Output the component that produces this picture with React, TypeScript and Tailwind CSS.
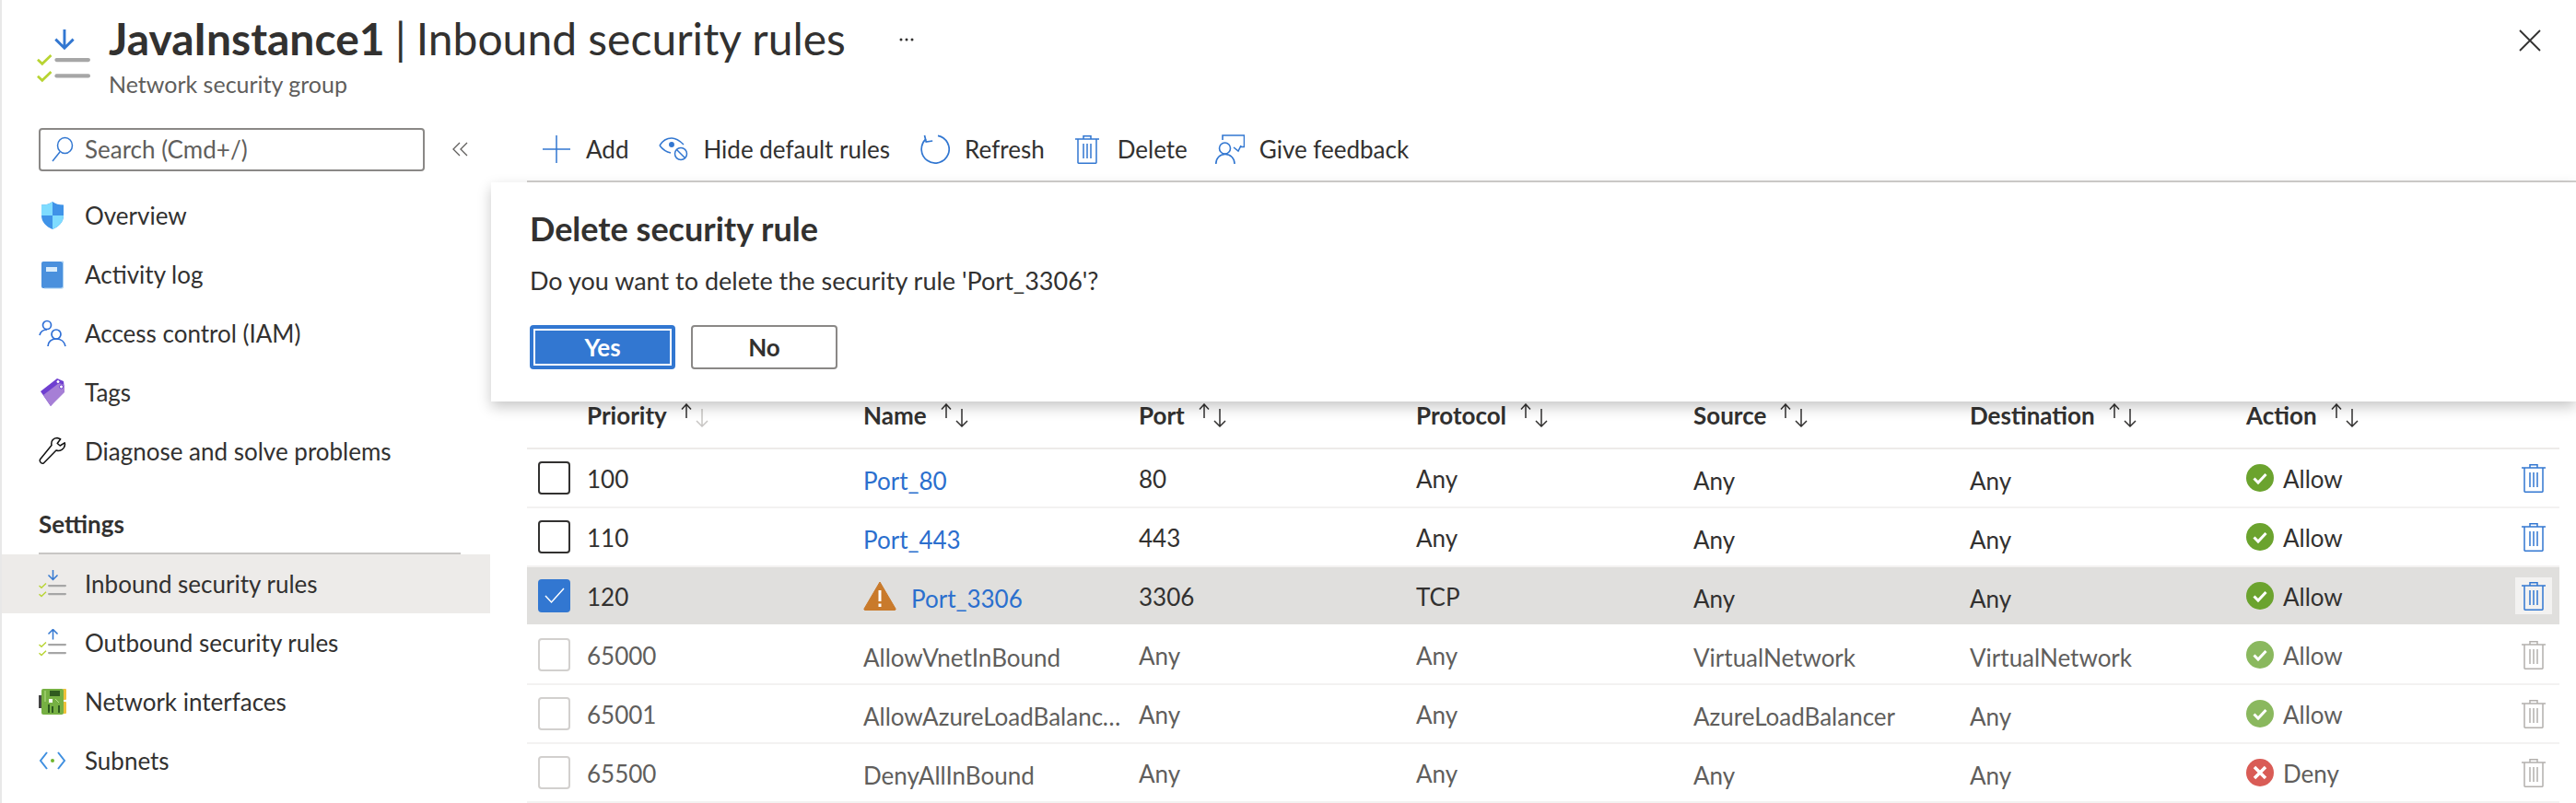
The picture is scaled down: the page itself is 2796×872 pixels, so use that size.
const blue = "#3277d1"

function RulesIcon({ up = false, big = false }: { up?: boolean; big?: boolean }) {
  return (
    <svg width={big ? 58 : 30} height={big ? 58 : 30} viewBox="0 0 30 30" className="shrink-0">
      {up ? (
        <path d="M15.500 11.500V.500M10.500 5.500l5-5 5 5" fill="none" stroke={blue} strokeWidth="1.500" />
      ) : (
        <path d="M15.500 0v10.500M10.500 5.500l5 5 5-5" fill="none" stroke={blue} strokeWidth="1.500" />
      )}
      <path d="M.500 17l2.500 2.300L8 14.500M.500 26.300l2.500 2.300L8 23.800" fill="none" stroke="#b8d432" strokeWidth="1.400" />
      <rect x="10" y="16" width="20" height="2.200" rx="1.100" fill="#a6a6a6" />
      <rect x="10" y="25" width="20" height="2.200" rx="1.100" fill="#a6a6a6" />
    </svg>
  )
}

function ShieldIcon() {
  return (
    <svg width="30" height="32" viewBox="0 0 30 32" className="shrink-0">
      <path d="M15 1c3 2.500 7 3.500 12 3.500V16c0 7-5 12-12 15C8 28 3 23 3 16V4.500C8 4.500 12 3.500 15 1z" fill="#3f93e8" />
      <path d="M15 1v15H3V4.500C8 4.500 12 3.500 15 1zM15 16h12c0 7-5 12-12 15z" fill="#7fdcff" />
    </svg>
  )
}

function BookIcon() {
  return (
    <svg width="30" height="32" viewBox="0 0 30 32" className="shrink-0">
      <rect x="3" y="2" width="23" height="29" rx="2" fill="#4a90dd" />
      <path d="M25 2h1.500v28a1 1 0 0 1-1 1H6" fill="none" stroke="#a6cff2" strokeWidth="1" />
      <rect x="8" y="8" width="12" height="5" fill="#d9ecfb" />
    </svg>
  )
}

function PeopleIcon() {
  return (
    <svg width="30" height="32" viewBox="0 0 30 32" fill="none" stroke="#2f6fd6" strokeWidth="1.700" className="shrink-0">
      <circle cx="9" cy="7" r="4.500" />
      <path d="M1 18c1-4 4-6 8-6" />
      <circle cx="19" cy="17" r="5" />
      <path d="M10 30c0-5 4-8 9-8s9 3 10 8" />
    </svg>
  )
}

function TagIcon() {
  return (
    <svg width="30" height="32" viewBox="0 0 30 32" className="shrink-0">
      <path d="M2 15L20 1l7 3 1 9-15 18z" fill="#6f3fd0" />
      <path d="M5 19L22 6l6 2 0 8-15 15z" fill="#a67fd6" />
      <circle cx="21" cy="4.500" r="2" fill="#fff" stroke="#6f3fd0" />
      <circle cx="24.500" cy="10" r="2" fill="#fff" stroke="#6f3fd0" />
    </svg>
  )
}

function WrenchIcon() {
  return (
    <svg width="30" height="32" viewBox="0 0 30 32" fill="none" stroke="#111" strokeWidth="1.500" className="shrink-0">
      <path d="M20 1.500c-4 0-7 3.500-6 8L1.800 24.500c-1.500 2 .5 5.500 3.500 4.500L19 15c4 1.500 9-1 9.500-6.500l-.3-1.700-5 3.200-3-2.500 3.500-4.700z" strokeLinejoin="round" />
    </svg>
  )
}

function NicIcon() {
  return (
    <svg width="30" height="30" viewBox="0 0 30 30" className="shrink-0">
      <rect x="0" y="8" width="3" height="14" fill="#444" />
      <rect x="26" y="1" width="4" height="12" rx="1" fill="#efc13a" />
      <rect x="26" y="15" width="4" height="13" rx="1" fill="#efc13a" />
      <rect x="3" y="1" width="24" height="28" rx="2" fill="#76b043" />
      <rect x="12" y="3" width="11" height="6" fill="#2f5a1f" />
      <rect x="11" y="12" width="4" height="4" fill="#fff" />
      <path d="M10 18h2v9h-2zM14 20h2v7h-2zM21 19h2v8h-2z" fill="#2f5a1f" />
      <path d="M7 3v12M18 12l4 4" stroke="#b7e08a" fill="none" />
    </svg>
  )
}

function SubnetIcon() {
  return (
    <svg width="30" height="22" viewBox="0 0 30 22" fill="none" strokeWidth="2" className="shrink-0">
      <path d="M9 2l-7 9 7 9" stroke="#3f8fe0" />
      <path d="M21 2l7 9-7 9" stroke="#3f8fe0" />
      <circle cx="15" cy="11" r="2" fill="#6fb52c" stroke="none" />
    </svg>
  )
}

function Trash({ color = blue }: { color?: string }) {
  return (
    <svg width="26" height="32" viewBox="0 0 26 32" fill="none" stroke={color} strokeWidth="1.500" className="shrink-0">
      <path d="M9 5V1.800h8V5M0 5h26M3 5v25.500a.7.7 0 0 0 .7.7h18.600a.7.7 0 0 0 .7-.7V5M9 10v16M13 10v16M17 10v16" />
    </svg>
  )
}

function SortArrows({ faded = false }: { faded?: boolean }) {
  return (
    <svg width="34" height="26" viewBox="0 0 34 26" fill="none" strokeWidth="1.500" className="ml-[13px] shrink-0">
      <path d="M8 16V1M3 6.500l5-5.500 5 5.500" stroke="#323130" />
      <path d="M25 6v19M19 19l6 6 6-6" stroke={faded ? "#c8c6c4" : "#323130"} />
    </svg>
  )
}

function Status({ kind, muted }: { kind: "Allow" | "Deny"; muted: boolean }) {
  const fill = kind === "Deny" ? "#d95c56" : muted ? "#8ab85e" : "#6ba32e"
  return (
    <svg width="30" height="30" viewBox="0 0 30 30" className="shrink-0">
      <circle cx="15" cy="15" r="15" fill={fill} />
      {kind === "Allow" ? (
        <path d="M8.500 15.500l4.500 4.500 8.500-9" fill="none" stroke="#fff" strokeWidth="3" />
      ) : (
        <path d="M9 9l12 12M21 9L9 21" fill="none" stroke="#fff" strokeWidth="3.500" />
      )}
    </svg>
  )
}

function NavItem({ icon, label, active }: { icon: React.ReactNode; label: string; active?: boolean }) {
  return (
    <div className={`flex items-center h-[64px] pl-[40px] ${active ? "bg-[#edebe9]" : ""}`}>
      <div className="w-[50px] flex items-center">{icon}</div>
      <span>{label}</span>
    </div>
  )
}

type Rule = {
  priority: string
  name: string
  port: string
  protocol: string
  source: string
  destination: string
  action: "Allow" | "Deny"
  kind: "custom" | "selected" | "default"
}

const rules: Rule[] = [
  { priority: "100", name: "Port_80", port: "80", protocol: "Any", source: "Any", destination: "Any", action: "Allow", kind: "custom" },
  { priority: "110", name: "Port_443", port: "443", protocol: "Any", source: "Any", destination: "Any", action: "Allow", kind: "custom" },
  { priority: "120", name: "Port_3306", port: "3306", protocol: "TCP", source: "Any", destination: "Any", action: "Allow", kind: "selected" },
  { priority: "65000", name: "AllowVnetInBound", port: "Any", protocol: "Any", source: "VirtualNetwork", destination: "VirtualNetwork", action: "Allow", kind: "default" },
  { priority: "65001", name: "AllowAzureLoadBalancerInBound", port: "Any", protocol: "Any", source: "AzureLoadBalancer", destination: "Any", action: "Allow", kind: "default" },
  { priority: "65500", name: "DenyAllInBound", port: "Any", protocol: "Any", source: "Any", destination: "Any", action: "Deny", kind: "default" },
]

const gridCols = "grid grid-cols-[65px_300px_299px_301px_301px_300px_300px_1fr] items-center"

function Row({ rule }: { rule: Rule }) {
  const muted = rule.kind === "default"
  const selected = rule.kind === "selected"
  return (
    <div
      className={`${gridCols} h-[64px] border-b-2 ${selected ? "bg-[#e0dfdd] border-white" : "border-[#f3f2f1]"} ${
        muted ? "text-[#605e5c]" : ""
      }`}
    >
      <div className="pl-[12px]">
        {selected ? (
          <div className="w-[35px] h-[36px] rounded-[4px] bg-[#3277d1] flex items-center justify-center">
            <svg width="22" height="18" viewBox="0 0 22 18" fill="none" stroke="#fff" strokeWidth="1.500">
              <path d="M1 9l6.500 7L21 1" />
            </svg>
          </div>
        ) : (
          <div className={`w-[35px] h-[36px] rounded-[4px] border-2 ${muted ? "border-[#d2d0ce]" : "border-[#323130]"}`} />
        )}
      </div>
      <div className="pt-[2px]">{rule.priority}</div>
      <div className="flex items-center pt-[6px] pr-[10px] min-w-0">
        {selected && (
          <svg width="36" height="32" viewBox="0 0 36 32" className="mr-[16px] shrink-0 -mt-[6px]">
            <path d="M18 1L35 30a1 1 0 0 1-1 1.500H2A1 1 0 0 1 1 30z" fill="#c97a2b" stroke="#c97a2b" strokeLinejoin="round" />
            <path d="M16.500 10h3v12h-3zM16.500 24.500h3v3.500h-3z" fill="#fff" />
          </svg>
        )}
        <span className={`truncate ${muted ? "" : "text-[#2b6fce]"}`}>{rule.name}</span>
      </div>
      <div className="pt-[2px]">{rule.port}</div>
      <div className="pt-[2px]">{rule.protocol}</div>
      <div className="pt-[6px]">{rule.source}</div>
      <div className="pt-[6px]">{rule.destination}</div>
      <div className="flex items-center justify-between">
        <div className="flex items-center gap-[10px]">
          <Status kind={rule.action} muted={muted} />
          <span className="pt-[2px]">{rule.action}</span>
        </div>
        <div className={`w-[40px] h-[40px] mr-[8px] flex items-center justify-center ${selected ? "bg-[#f3f2f1]" : ""}`}>
          <Trash color={muted ? "#b3b0ad" : blue} />
        </div>
      </div>
    </div>
  )
}

export default function App() {
  return (
    <div className="relative w-[2796px] h-[872px] overflow-hidden bg-white border-l-2 border-[#e8e8e8] font-['Lato','Liberation_Sans',sans-serif] text-[26px] text-[#323130]">
      <header className="flex h-[138px] pl-[38px] pt-[14px]">
        <div className="pt-[18px] w-[78px]">
          <RulesIcon big />
        </div>
        <div>
          <div className="flex items-center h-[56px] text-[48px] leading-[56px]">
            <span className="font-bold">JavaInstance1</span>
            <span className="mx-[11px]">|</span>
            <span>Inbound security rules</span>
            <svg width="16" height="4" viewBox="0 0 16 4" className="ml-[58px] mt-[2px]" fill="#323130">
              <circle cx="2" cy="2" r="1.500" />
              <circle cx="8" cy="2" r="1.500" />
              <circle cx="14" cy="2" r="1.500" />
            </svg>
          </div>
          <div className="text-[25px] text-[#605e5c] leading-[30px] mt-[6px]">Network security group</div>
        </div>
        <svg width="24" height="24" viewBox="0 0 24 24" className="ml-auto mr-[38px] mt-[18px]" stroke="#323130" strokeWidth="1.800" fill="none">
          <path d="M1 1l22 22M23 1L1 23" />
        </svg>
      </header>

      <div className="flex">
        <aside className="w-[530px] shrink-0">
          <div className="flex items-center h-[48px] pl-[40px]">
            <div className="flex items-center w-[419px] h-[47px] border-2 border-[#8a8886] rounded-[4px] pl-[12px] text-[#605e5c]">
              <svg width="24" height="28" viewBox="0 0 24 28" fill="none" stroke={blue} strokeWidth="1.500" className="mr-[12px]">
                <ellipse cx="14.500" cy="10" rx="8" ry="8.500" />
                <path d="M9 17L1 27" />
              </svg>
              <span>Search (Cmd+/)</span>
            </div>
            <svg width="18" height="16" viewBox="0 0 18 16" fill="none" stroke="#605e5c" strokeWidth="1.300" className="ml-[30px]">
              <path d="M8 1L1 8l7 7M16 1L9 8l7 7" />
            </svg>
          </div>
          <nav className="mt-[16px]">
            <NavItem icon={<ShieldIcon />} label="Overview" />
            <NavItem icon={<BookIcon />} label="Activity log" />
            <NavItem icon={<PeopleIcon />} label="Access control (IAM)" />
            <NavItem icon={<TagIcon />} label="Tags" />
            <NavItem icon={<WrenchIcon />} label="Diagnose and solve problems" />
          </nav>
          <div className="ml-[40px] mr-[32px] h-[80px] border-b-2 border-[#c8c6c4] flex items-center pt-[16px] font-bold">Settings</div>
          <NavItem icon={<RulesIcon />} label="Inbound security rules" active />
          <NavItem icon={<RulesIcon up />} label="Outbound security rules" />
          <NavItem icon={<NicIcon />} label="Network interfaces" />
          <NavItem icon={<SubnetIcon />} label="Subnets" />
        </aside>

        <main className="flex-1 min-w-0">
          <div className="ml-[40px] h-[60px] border-b-2 border-[#d2d0ce]">
            <div className="flex items-center h-[48px] gap-[33px] pl-[17px]">
              <div className="flex items-center gap-[17px]">
                <svg width="30" height="30" viewBox="0 0 30 30" stroke={blue} strokeWidth="1.500">
                  <path d="M15 0v30M0 15h30" />
                </svg>
                <span>Add</span>
              </div>
              <div className="flex items-center gap-[16px]">
                <svg width="32" height="26" viewBox="0 0 32 26" fill="none" stroke={blue} strokeWidth="1.500">
                  <path d="M1 9c3-5 8-8 13-8s9 3 13 7" />
                  <path d="M1 9c3 4 7 7 12 8" />
                  <circle cx="14" cy="8" r="2.200" fill={blue} />
                  <circle cx="24" cy="18" r="6.500" />
                  <path d="M19.500 13.500l9 9" />
                </svg>
                <span>Hide default rules</span>
              </div>
              <div className="flex items-center gap-[16px]">
                <svg width="32" height="32" viewBox="0 0 32 32" fill="none" stroke={blue} strokeWidth="1.700">
                  <path d="M19 1.300A15 15 0 1 1 6 5" />
                  <path d="M4.500 1L6.200 8l7-1" />
                </svg>
                <span>Refresh</span>
              </div>
              <div className="flex items-center gap-[20px]">
                <Trash />
                <span>Delete</span>
              </div>
              <div className="flex items-center gap-[16px] -ml-[3px]">
                <svg width="32" height="32" viewBox="0 0 32 32" fill="none" stroke={blue} strokeWidth="1.600">
                  <path d="M8 6V1h23.500v12.500H27" />
                  <path d="M20 14l5 4 3-6" />
                  <circle cx="10.500" cy="15" r="6" />
                  <path d="M.800 32c0-6 4-10.500 10-10.500S21 26 21 32" />
                </svg>
                <span>Give feedback</span>
              </div>
            </div>
          </div>

          <div className="ml-[40px] mr-[18px] mt-[222px]">
            <div className={`${gridCols} h-[68px] pb-[4px] border-b-2 border-[#edebe9] font-bold leading-[28px]`}>
              <div />
              <div className="flex items-center">
                Priority
                <SortArrows faded />
              </div>
              {["Name", "Port", "Protocol", "Source", "Destination", "Action"].map((title) => (
                <div key={title} className="flex items-center">
                  {title}
                  <SortArrows />
                </div>
              ))}
            </div>
            {rules.map((rule) => (
              <Row key={rule.priority} rule={rule} />
            ))}
          </div>
        </main>
      </div>

      <div className="absolute left-[531px] right-0 top-[198px] h-[238px] bg-white shadow-[0_6px_14px_rgba(0,0,0,0.22)] pl-[42px] pt-[28px]">
        <div className="text-[36px] leading-[44px] font-bold">Delete security rule</div>
        <div className="mt-[17px] text-[27px] leading-[36px]">Do you want to delete the security rule 'Port_3306'?</div>
        <div className="flex gap-[17px] mt-[30px]">
          <button className="w-[158px] h-[48px] rounded-[4px] border-4 border-[#3277d1] bg-[#3277d1] shadow-[inset_0_0_0_2px_#fff] text-white font-bold">Yes</button>
          <button className="w-[159px] h-[48px] rounded-[4px] border-2 border-[#8a8886] bg-white font-bold">No</button>
        </div>
      </div>
    </div>
  )
}
